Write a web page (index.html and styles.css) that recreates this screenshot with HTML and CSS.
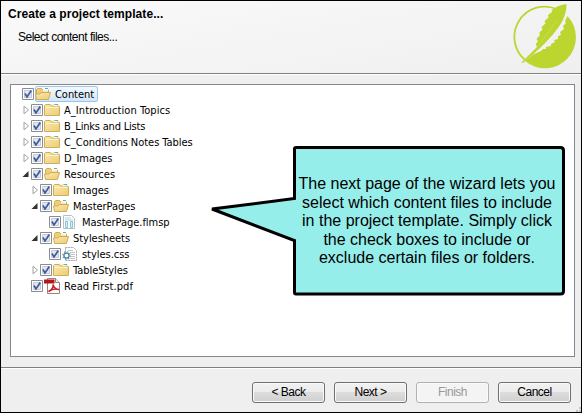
FILE: index.html
```html
<!DOCTYPE html>
<html lang="en">
<head>
<meta charset="utf-8">
<title>Create a project template</title>
<link rel="stylesheet" href="styles.css">
</head>
<body>
<svg class="defs" width="0" height="0">
  <defs>
    <linearGradient id="fold" x1="0" y1="0" x2="1" y2="1"><stop offset="0" stop-color="#fbe9ae"/><stop offset="1" stop-color="#e9cc78"/></linearGradient>
    <symbol id="check" viewBox="0 0 12 12"><path d="M.5.5h11v11H.5z" fill="#fff" stroke="#8a8d91"/><path d="M2.5 2.5h7v7h-7z" fill="#e3e7ee" stroke="#c5cad3"/><path d="M3 5.5 5 9 9.3 2.5" fill="none" stroke="#3f5a9f" stroke-width="1.7"/></symbol>
    <symbol id="closed" viewBox="0 0 16 14"><path d="M.5 12.5v-10l1-1h5l1 1.5h7l1 1v8.500z" fill="url(#fold)" stroke="#d3ad56"/><path d="M9 1.500h5v2H8z" fill="#fff7da" stroke="#dcb866" stroke-width=".6"/><path d="M11 1h3v1h-3z" fill="#38b9e6"/><path d="M1.500 4.500h13" stroke="#fff3c8"/></symbol>
    <symbol id="open" viewBox="0 0 16 14"><path d="M1.500 11.500v-9l1-1h4l1 1.500h6v8z" fill="#efcf7a" stroke="#d3ad56"/><path d="M8 1.500h5v3H8z" fill="#fff7da"/><path d="M10 1h3v1h-3z" fill="#38b9e6"/><path d="M1.500 12.500.5 7h4.500l1-1.500h9.500l-2 7z" fill="url(#fold)" stroke="#d3ad56"/></symbol>
    <symbol id="page" viewBox="0 0 16 14"><path d="M1.500.5h8l3 3v10h-11z" fill="#fff" stroke="#b9bec2"/><path d="M3 3h6M3 5h8" stroke="#a8d4df"/><path d="M3.500 6.500h2v6h-2zM8.500 6.500h2v6h-2z" fill="#d6f2f7" stroke="#89c5d5"/></symbol>
    <symbol id="css" viewBox="0 0 16 14"><path d="M3.500.5h8l3 3v10h-11z" fill="#fff" stroke="#aaa" stroke-dasharray="2 .6"/><path d="M6 3.500h5M8 5.500h5M9 7.500h4M9 9.500h4M8 11.500h5" stroke="#c3c6c9"/><circle cx="4.500" cy="8.500" r="2.600" fill="#fff" stroke="#5b8bac" stroke-width="1.500"/><circle cx="4.500" cy="8.500" r="3.800" fill="none" stroke="#6c98b5" stroke-width="1.200" stroke-dasharray="1.300 1.680"/></symbol>
    <symbol id="pdf" viewBox="0 0 16 16"><path d="M3.500.5h8l4 4v11h-12z" fill="#fff" stroke="#9a8080"/><path d="M11.500.5v4h4" fill="#eee" stroke="#9a8080"/><path d="M0 1.500h10.500v4H0z" fill="#b3141d"/><path d="M4.500 13.500C8 12 9.500 9.500 9 6.500c1 3.500 3 5 6 5C12 10.500 8 11 4.500 13.500z" fill="none" stroke="#c5202a" stroke-width="1.500"/></symbol>
    <symbol id="shut" viewBox="0 0 8 10"><path d="M1.500 1.200v7.600L6 5z" fill="#fff" stroke="#a2a2a2"/></symbol>
    <symbol id="expanded" viewBox="0 0 8 10"><path d="M6 2v6H0z" fill="#303030"/></symbol>
  </defs>
</svg>
<main class="wizard">
  <header class="head">
    <div>
      <h1>Create a project template...</h1>
      <p>Select content files...</p>
    </div>
    <svg class="logo" width="64" height="66" viewBox="513 3 64 66">
      <path d="M556.500 9A30.300 30.300 0 0 0 524.500 59.500" fill="none" stroke="#bdd52f" stroke-width="1.800"/>
      <path d="M567.500 16A31 31 0 0 1 525 61L534 54l7-3 2-2 3 0 0-2 5-1 0-2 4-2-1-2 4-1 0-3 3-1-1-3 4-3-1-3 3-3-1-2z" fill="#bdd52f"/>
      <path d="M566.500 4C566.500 12 564 20 558 28L552.500 35 546 42 539 49 523 63 521.500 62.500 537 47 535.800 44 538 41.500 536.500 39 540 35 539 33 542.500 29.500 541.500 27 545.500 23.500 544.500 21 548.500 17.500 548 15 552 12 551.500 10.500C556 6.500 561 4.500 566.500 4z" fill="#bdd52f"/>
      <path d="M538.500 45.500 557 20" stroke="#d2e273" stroke-width=".5"/>
    </svg>
  </header>
  <section class="body">
    <ul class="tree">
      <li class="root"><svg class="cb"><use href="#check"/></svg><span class="sel"><svg class="ic"><use href="#open"/></svg><b>Content</b></span></li>
      <li><svg class="ar"><use href="#shut"/></svg><svg class="cb"><use href="#check"/></svg><svg class="ic"><use href="#closed"/></svg><b class="wide">A_Introduction Topics</b></li>
      <li><svg class="ar"><use href="#shut"/></svg><svg class="cb"><use href="#check"/></svg><svg class="ic"><use href="#closed"/></svg><b class="tight">B_Links and Lists</b></li>
      <li><svg class="ar"><use href="#shut"/></svg><svg class="cb"><use href="#check"/></svg><svg class="ic"><use href="#closed"/></svg><b>C_Conditions Notes Tables</b></li>
      <li><svg class="ar"><use href="#shut"/></svg><svg class="cb"><use href="#check"/></svg><svg class="ic"><use href="#closed"/></svg><b>D_Images</b></li>
      <li><svg class="ar"><use href="#expanded"/></svg><svg class="cb"><use href="#check"/></svg><svg class="ic"><use href="#open"/></svg><b class="wide">Resources</b></li>
      <li class="l2"><svg class="ar"><use href="#shut"/></svg><svg class="cb"><use href="#check"/></svg><svg class="ic"><use href="#closed"/></svg><b>Images</b></li>
      <li class="l2"><svg class="ar"><use href="#expanded"/></svg><svg class="cb"><use href="#check"/></svg><svg class="ic"><use href="#open"/></svg><b>MasterPages</b></li>
      <li class="l3"><svg class="ar"></svg><svg class="cb"><use href="#check"/></svg><svg class="ic"><use href="#page"/></svg><b>MasterPage.flmsp</b></li>
      <li class="l2"><svg class="ar"><use href="#expanded"/></svg><svg class="cb"><use href="#check"/></svg><svg class="ic"><use href="#open"/></svg><b>Stylesheets</b></li>
      <li class="l3"><svg class="ar"></svg><svg class="cb"><use href="#check"/></svg><svg class="ic"><use href="#css"/></svg><b>styles.css</b></li>
      <li class="l2"><svg class="ar"><use href="#shut"/></svg><svg class="cb"><use href="#check"/></svg><svg class="ic"><use href="#closed"/></svg><b>TableStyles</b></li>
      <li><svg class="ar"></svg><svg class="cb"><use href="#check"/></svg><svg class="ic pdf"><use href="#pdf"/></svg><b class="wide">Read First.pdf</b></li>
    </ul>
  </section>
  <footer class="foot">
    <button>&lt; Back</button><button>Next &gt;</button><button disabled>Finish</button><button>Cancel</button>
    <svg class="grip" width="5" height="5"><path d="M3 0h2v2H3zM0 3h2v2H0zM3 3h2v2H3z" fill="#c4c4c4"/></svg>
  </footer>
  <aside class="callout">
    <svg width="360" height="152" viewBox="0 0 360 152"><path d="M90 2.500H354.500Q357.500 2.500 357.500 5.500V146Q357.500 149 354.500 149H90Q88.500 149 88.500 147.500V95.500L6 64 88.500 53.500V4Q88.500 2.500 90 2.500z" fill="#96eeeb" stroke="#000" stroke-width="3"/></svg>
    <p>The next page of the wizard lets you<br>select which content files to include<br>in the project template. Simply click<br>the check boxes to include or<br>exclude certain files or folders.</p>
  </aside>
</main>
</body>
</html>
```

FILE: styles.css
```css
* { box-sizing: border-box; }
body { margin: 0; font-family: "Liberation Sans", sans-serif; color: #000; }
.defs { position: absolute; }
.wizard {
  position: relative; width: 582px; height: 413px; border: 1px solid #000;
  background: #efefef; display: flex; flex-direction: column; overflow: hidden;
}
.head {
  height: 74px; display: flex; justify-content: space-between; flex: none;
  padding: 5px 4px 0 7px;
  background: linear-gradient(170deg, #fafafa, #efefef);
  border-bottom: 1px solid #fff; box-shadow: inset 0 -1px #808080;
}
.head h1 { margin: 0; font: bold 12px/16px "Liberation Sans", sans-serif; letter-spacing: .07px; }
.head p { margin: 7px 0 0 10px; font: 12px/16px "Liberation Sans", sans-serif; letter-spacing: -.5px; }
.logo { flex: none; margin-top: -3px; }
.body { padding: 9px 6px 10px 9px; height: 292px; flex: none; }
.tree {
  margin: 0; padding: 1px 0 0 11px; height: 273px; list-style: none;
  background: #fff; border: 1px solid #828790;
}
.tree li { display: flex; align-items: center; height: 16px; }
.tree b { font: 11px/16px "DejaVu Sans Condensed", sans-serif; white-space: pre; margin: 2px 0 0 4px; letter-spacing: -.04px; }
.tree .wide { letter-spacing: .08px; }
.tree .tight { letter-spacing: -.2px; }
.tree .l2 { padding-left: 9px; }
.tree .l3 { padding-left: 18px; }
.ar { width: 9px; height: 10px; flex: none; }
.cb { width: 12px; height: 12px; flex: none; margin-right: 1px; }
.ic { width: 16px; height: 14px; flex: none; }
.ic.pdf { height: 16px; }
.sel { display: flex; align-items: center; height: 16px; padding-right: 3px; border: 1px solid #9ac6ec; border-radius: 2px; background: linear-gradient(#f4f9fe, #d3e6fa); }
.sel .ic { margin-left: -1px; }
.foot {
  flex: 1; display: flex; gap: 9px; justify-content: flex-end; padding: 14px 10px 0 0;
  border-top: 1px solid #808080; box-shadow: inset 0 1px #fff; position: relative;
}
.foot button {
  width: 73px; height: 21px; padding: 0; border: 1px solid #707070; border-radius: 3px;
  box-shadow: inset 0 0 0 1px #fafafa; font: 12px/19px "Liberation Sans", sans-serif; letter-spacing: -.5px; color: #000;
  background: linear-gradient(#f2f2f2, #ebebeb 50%, #dddddd 50%, #cfcfcf);
}
.foot button:disabled { background: #f4f4f4; border-color: #adb2b5; color: #999; }
.grip { position: absolute; right: 0; bottom: 0; }
.callout { position: absolute; left: 205px; top: 144px; width: 360px; height: 152px; }
.callout svg { display: block; }
.callout p { position: absolute; left: 87px; width: 268px; top: 30px; margin: 0; font-size: 16px; line-height: 18.500px; text-align: center; white-space: nowrap; }
```
